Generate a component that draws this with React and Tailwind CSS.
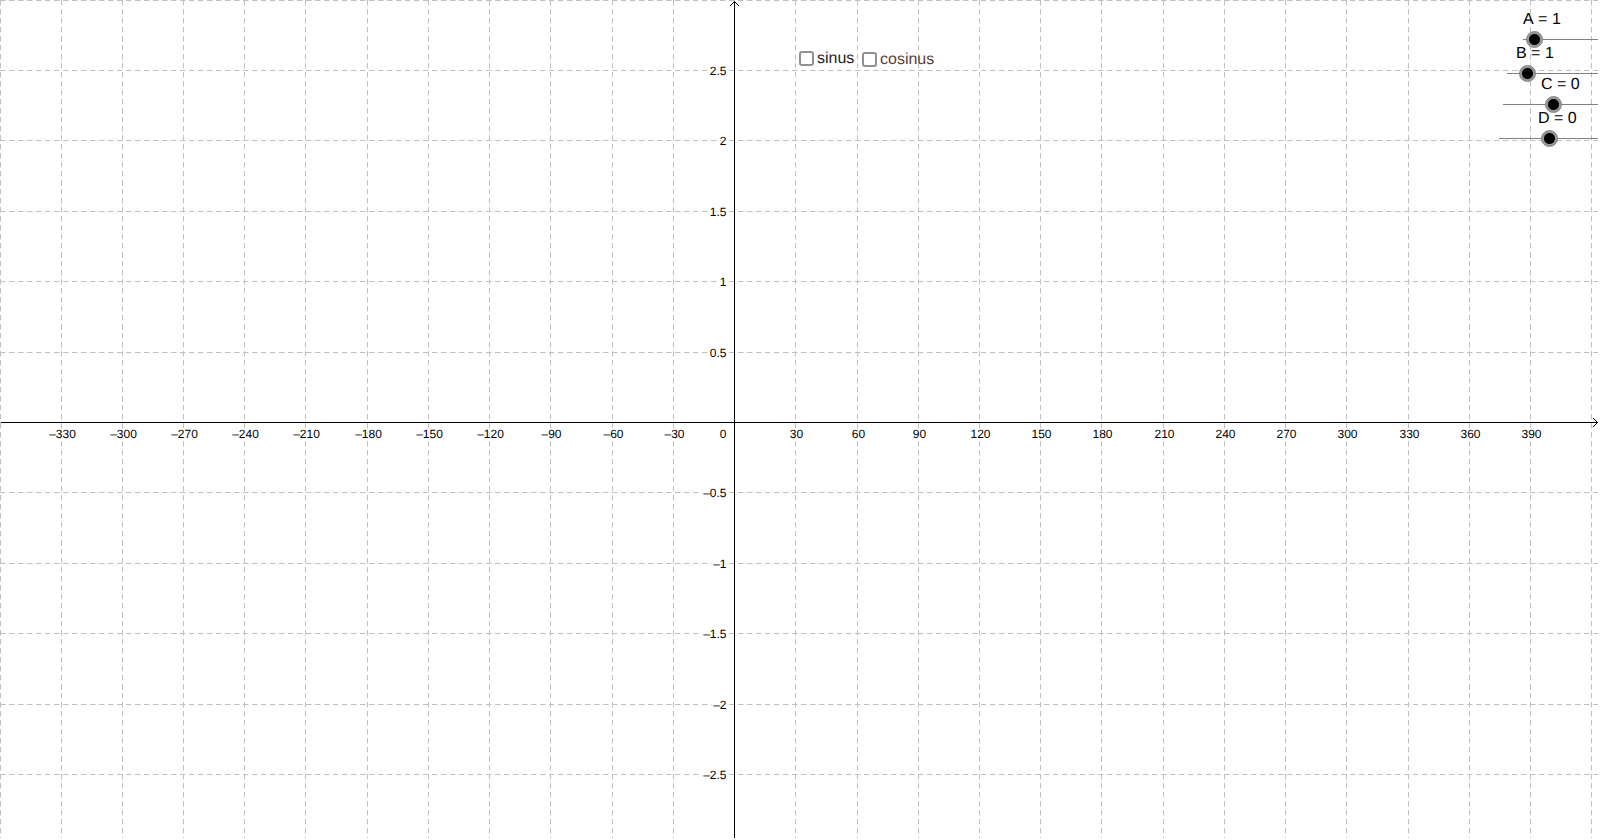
import { useEffect, useState } from "react";

const ORIGIN = { x: 734.5, y: 422.5 };
const STEP = { x: 61.23, y: 70.4 };

const functions = [
  { id: "sinus", color: "text-[#222222]", place: "left-[799px] top-[50px]" },
  { id: "cosinus", color: "text-[#5d4037]", place: "left-[862px] top-[51px]" },
];

const params = [
  { name: "A", min: 0, max: 10, place: "left-[1523px] top-[9px]", track: "w-[112px]", label: "" },
  { name: "B", min: -1, max: 9, place: "left-[1507px] top-[43px]", track: "w-[102px]", label: "ml-[9px]" },
  { name: "C", min: -5, max: 5, place: "left-[1503px] top-[74px]", track: "w-[101px]", label: "ml-[38px]" },
  { name: "D", min: -5, max: 5, place: "left-[1499px] top-[108px]", track: "w-[101px]", label: "ml-[39px]" },
];

const format = (n) => String(n).replace("-", "–");

const useWindowSize = () => {
  const [size, setSize] = useState({
    width: window.innerWidth,
    height: window.innerHeight,
  });

  useEffect(() => {
    const onResize = () =>
      setSize({ width: window.innerWidth, height: window.innerHeight });
    window.addEventListener("resize", onResize);
    return () => window.removeEventListener("resize", onResize);
  }, []);

  return size;
};

const range = (from, to) =>
  Array.from({ length: to - from + 1 }, (_, i) => from + i);

const curve = (fn, { A, B, C, D }, width) => {
  const points = [];
  for (let x = 0; x <= width; x += 2) {
    const degrees = ((x - ORIGIN.x) / STEP.x) * 30;
    const y = A * fn(((B * degrees + C) * Math.PI) / 180) + D;
    points.push(`${x},${ORIGIN.y - y * 2 * STEP.y}`);
  }
  return points.join(" ");
};

const Graph = ({ width, height, values, shown }) => {
  // the drawing area stops two pixels short of the window
  const right = width - 2;
  const bottom = height - 2;
  const columns = range(
    Math.ceil(-(ORIGIN.x + 1) / STEP.x),
    Math.floor((right - ORIGIN.x) / STEP.x)
  );
  const rows = range(
    Math.ceil((ORIGIN.y - bottom) / STEP.y),
    Math.floor((ORIGIN.y + 1) / STEP.y)
  );
  const colX = (i) => Math.max(0, Math.floor(ORIGIN.x + 0.1 + i * STEP.x)) + 0.5;
  const rowY = (i) => Math.max(0, Math.floor(ORIGIN.y - i * STEP.y)) + 0.5;

  return (
    <svg className="block" width={right} height={bottom}>
      <g stroke="#c0c0c0" strokeDasharray="5.5 3.5">
        {columns.map((i) => (
          <line key={i} x1={colX(i)} x2={colX(i)} y1="0" y2={bottom} />
        ))}
        {rows.map((i) => (
          <line key={i} x1="0" x2={right} y1={rowY(i)} y2={rowY(i)} />
        ))}
      </g>

      <g stroke="#000000" fill="none">
        <path d={`M1 ${ORIGIN.y}H${right}`} />
        <path d={`M${right - 5} ${ORIGIN.y - 4.5}l4.5 4.5l-4.5 4.5`} />
        <path d={`M${ORIGIN.x} 1V${bottom}`} />
        <path d={`M${ORIGIN.x - 4.5} 6l4.5 -4.5l4.5 4.5`} />
      </g>

      <g
        className="text-[12px] [text-rendering:geometricPrecision]"
        fill="#000000"
        stroke="#ffffff"
        strokeWidth="3"
        paintOrder="stroke"
      >
        {columns
          .filter((i) => i !== 0 && colX(i) > 30 && colX(i) < right - 20)
          .map((i) => (
            <text
              key={i}
              x={colX(i) + 1}
              y={ORIGIN.y + 15.5}
              textAnchor="middle"
            >
              {format(i * 30)}
            </text>
          ))}
        {rows
          .filter((i) => i !== 0 && rowY(i) > 10)
          .map((i) => (
            <text key={i} x={ORIGIN.x - 8} y={rowY(i) + 4.5} textAnchor="end">
              {format(i / 2)}
            </text>
          ))}
        <text x={ORIGIN.x - 8} y={ORIGIN.y + 15.5} textAnchor="end">
          0
        </text>
      </g>

      {shown.sinus && (
        <polyline
          points={curve(Math.sin, values, right)}
          fill="none"
          stroke="#222222"
          strokeWidth="2"
        />
      )}
      {shown.cosinus && (
        <polyline
          points={curve(Math.cos, values, right)}
          fill="none"
          stroke="#5d4037"
          strokeWidth="2"
        />
      )}
    </svg>
  );
};

const Slider = ({ param, value, onChange }) => (
  <div className={`absolute flex flex-col items-start ${param.place}`}>
    <label
      htmlFor={param.name}
      className={`text-base leading-[22px] whitespace-nowrap [font-kerning:none] [text-rendering:geometricPrecision] ${param.label}`}
    >
      {param.name} = {format(value)}
    </label>
    <div className={`relative flex h-4 items-center ${param.track}`}>
      <span className="absolute inset-x-0 h-px bg-[#808080]" />
      <input
        id={param.name}
        type="range"
        min={param.min}
        max={param.max}
        step="0.1"
        value={value}
        onChange={(e) => onChange(Number(e.target.value))}
        className="absolute -inset-x-2 h-5 appearance-none bg-transparent [&::-webkit-slider-thumb]:size-[17px] [&::-webkit-slider-thumb]:appearance-none [&::-webkit-slider-thumb]:rounded-full [&::-webkit-slider-thumb]:border [&::-webkit-slider-thumb]:border-[#808080] [&::-webkit-slider-thumb]:bg-[radial-gradient(circle,#000_5px,#999_6px)]"
      />
    </div>
  </div>
);

const App = () => {
  const { width, height } = useWindowSize();
  const [shown, setShown] = useState({ sinus: false, cosinus: false });
  const [values, setValues] = useState({ A: 1, B: 1, C: 0, D: 0 });

  return (
    <main className="relative mr-0.5 h-screen overflow-hidden bg-white font-['Liberation_Sans',Arial,sans-serif] text-black">
      <Graph width={width} height={height} values={values} shown={shown} />

      {functions.map(({ id, color, place }) => (
        <label
          key={id}
          className={`absolute flex items-start gap-[3px] text-base leading-[18px] [text-rendering:geometricPrecision] ${color} ${place}`}
        >
          <input
            type="checkbox"
            checked={shown[id]}
            onChange={(e) => setShown({ ...shown, [id]: e.target.checked })}
            className="mt-px size-[15px] appearance-none rounded-[3px] border-2 border-[#909090] bg-white checked:bg-[#6557d2]"
          />
          {id}
        </label>
      ))}

      {params.map((param) => (
        <Slider
          key={param.name}
          param={param}
          value={values[param.name]}
          onChange={(value) => setValues({ ...values, [param.name]: value })}
        />
      ))}
    </main>
  );
};

export default App;
